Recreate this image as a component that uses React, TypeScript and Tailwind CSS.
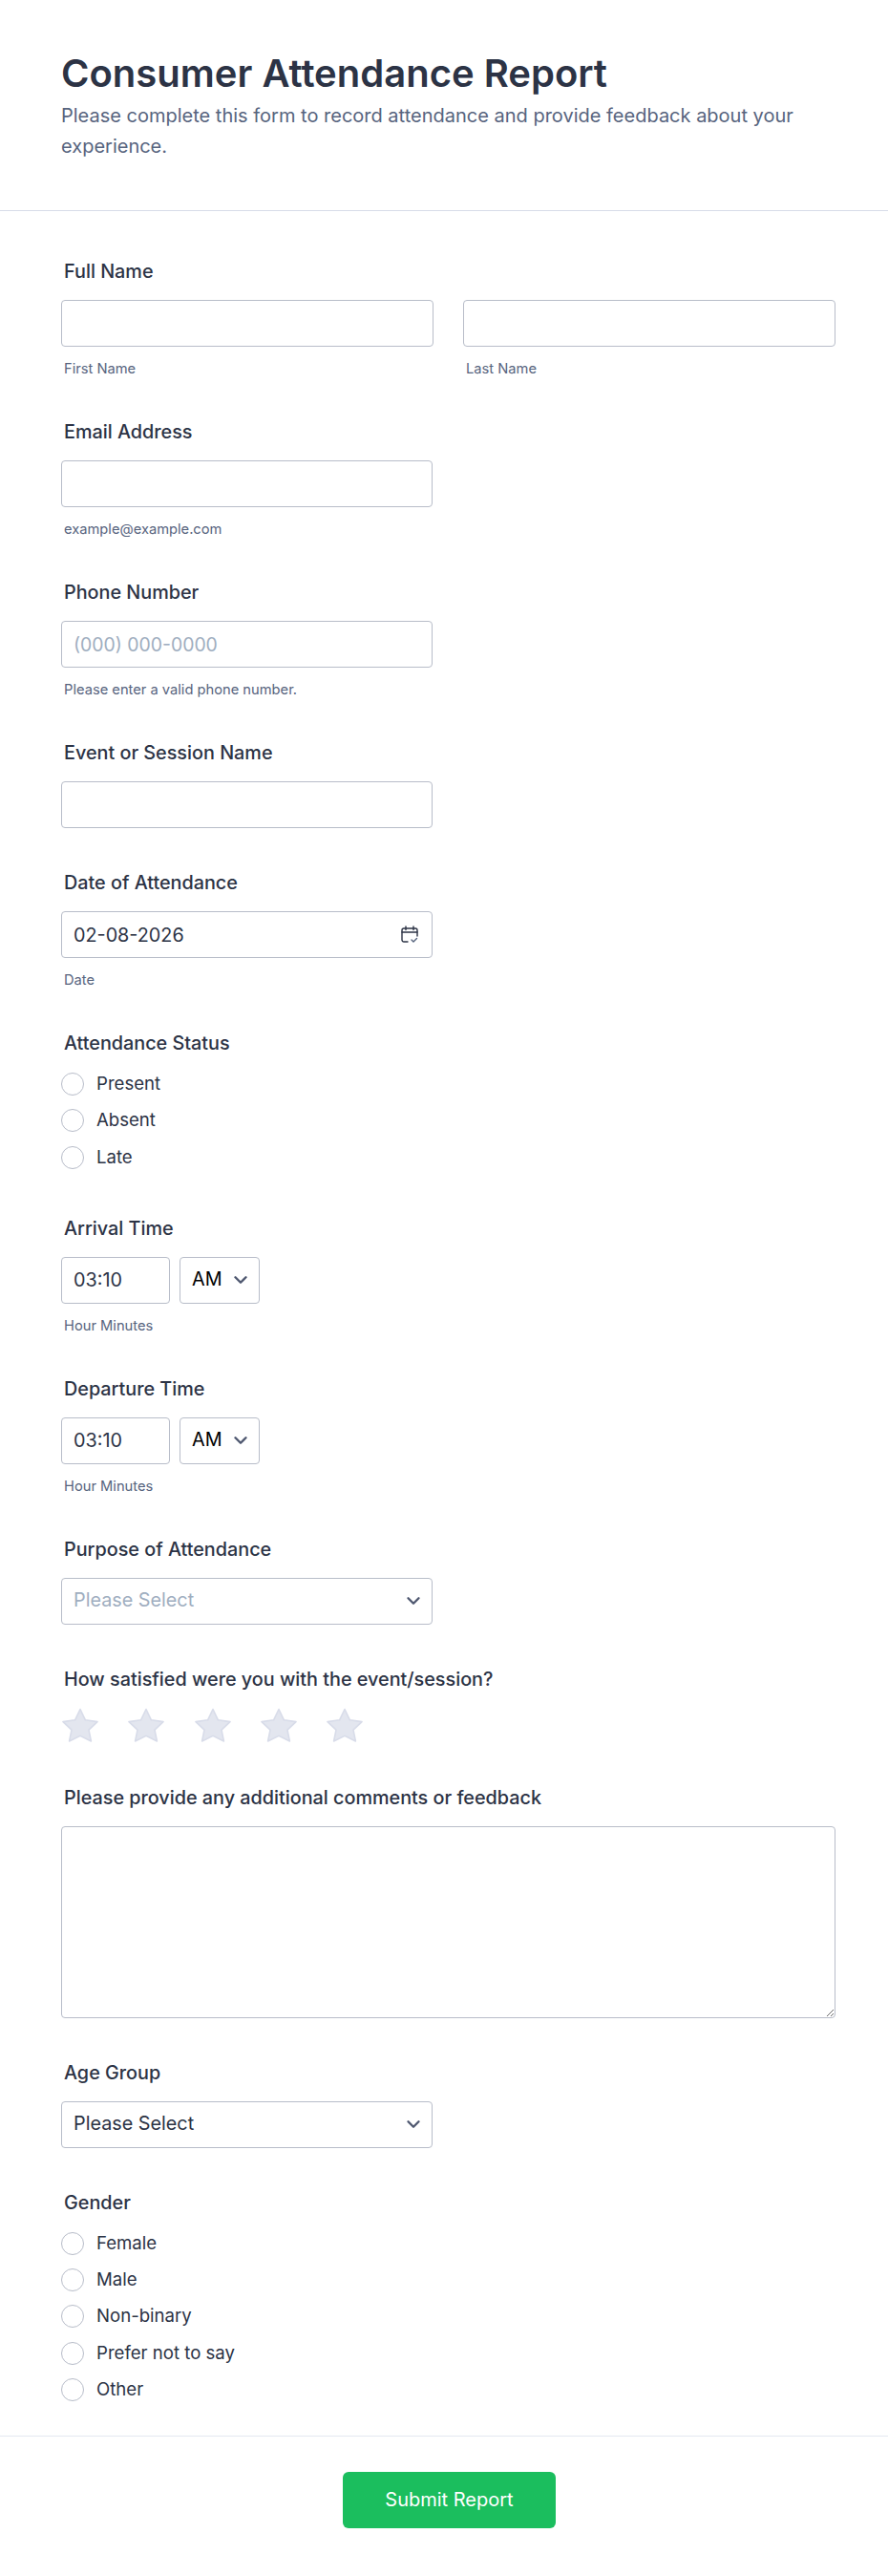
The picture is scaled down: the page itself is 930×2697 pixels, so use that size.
import { ChevronDown } from 'lucide-react'
import type { ReactNode } from 'react'

const inputCls =
  'h-[49px] rounded border border-[#b8bdc9] bg-white px-[12px] text-[19.8px] text-[#2c3345] outline-none placeholder:text-[19.4px] placeholder:text-[#a0aec0]'

const Label = ({ children }: { children: ReactNode }) => (
  <div className="mb-[18px] pl-[3px] text-[19.8px] leading-[24px] font-medium text-[#2c3345]">{children}</div>
)

const Sub = ({ children }: { children: ReactNode }) => (
  <div className="mt-[14px] pl-[3px] text-[14.7px] leading-[18px] text-[#57647e]">{children}</div>
)

const Radios = ({ options }: { options: string[] }) => (
  <div className="mt-[19px] flex flex-col gap-[14.33px]">
    {options.map((option) => (
      <label key={option} className="flex h-[24px] items-center gap-[13px] text-[18.6px] text-[#2c3345]">
        <span className="h-[24px] w-[24px] rounded-full border border-[#b8bdc9] bg-white" />
        {option}
      </label>
    ))}
  </div>
)

const TimeField = () => (
  <div>
    <div className="flex gap-[10px]">
      <input className={`${inputCls} w-[114px]`} defaultValue="03:10" />
      <div className="relative w-[84px]">
        <select className={`${inputCls} w-full appearance-none !text-black`} defaultValue="AM">
          <option>AM</option>
          <option>PM</option>
        </select>
        <ChevronDown className="pointer-events-none absolute top-[13px] right-[9px] h-[22px] w-[22px] text-[#4f5870]" strokeWidth={2.6} />
      </div>
    </div>
    <Sub>Hour Minutes</Sub>
  </div>
)

const SelectField = ({ placeholder }: { placeholder?: boolean }) => (
  <div className="relative w-[389px]">
    <select className={`${inputCls} w-full appearance-none ${placeholder ? '!text-[#a0aec0]' : ''}`}>
      <option>Please Select</option>
    </select>
    <ChevronDown className="pointer-events-none absolute top-[13px] right-[9px] h-[22px] w-[22px] text-[#4f5870]" strokeWidth={2.6} />
  </div>
)

const Star = () => (
  <svg width="40" height="36" viewBox="0 0 40 36" fill="#e3e6ef" stroke="#d8dce9" strokeWidth="1.6" strokeLinejoin="round">
    <path d="M20 1.5 25.4 12.8 38 14.6 29 23.2 31.4 35 20 29.4 8.6 35 11 23.2 2 14.6 14.6 12.8Z" />
  </svg>
)

export default function App() {
  return (
    <div className="min-h-[2697px] bg-white font-['Inter',sans-serif] text-[#2c3345]">
      <header className="border-b border-[#d8dce9] px-[64px] pt-[52px] pb-[51px]">
        <h1 className="text-[40px] leading-[50px] font-semibold text-[#2c3345]">Consumer Attendance Report</h1>
        <p className="mt-[3px] text-[20px] leading-[32px] text-[#57647e]">
          Please complete this form to record attendance and provide feedback about your experience.
        </p>
      </header>

      <form className="flex flex-col gap-[45px] pt-[51px] pr-[55px] pb-[36px] pl-[64px]">
        <div>
          <Label>Full Name</Label>
          <div className="flex gap-[31px]">
            <div className="w-[390px]">
              <input className={`${inputCls} w-full`} />
              <Sub>First Name</Sub>
            </div>
            <div className="w-[390px]">
              <input className={`${inputCls} w-full`} />
              <Sub>Last Name</Sub>
            </div>
          </div>
        </div>

        <div>
          <Label>Email Address</Label>
          <input className={`${inputCls} w-[389px]`} />
          <Sub>example@example.com</Sub>
        </div>

        <div>
          <Label>Phone Number</Label>
          <input className={`${inputCls} w-[389px]`} placeholder="(000) 000-0000" />
          <Sub>Please enter a valid phone number.</Sub>
        </div>

        <div>
          <Label>Event or Session Name</Label>
          <input className={`${inputCls} w-[389px]`} />
        </div>

        <div>
          <Label>Date of Attendance</Label>
          <div className="relative w-[389px]">
            <input className={`${inputCls} w-full`} defaultValue="02-08-2026" />
            <svg className="absolute top-[15px] right-[15px]" width="18" height="19" viewBox="0 0 18 19" fill="none" stroke="#2c3345" strokeWidth="1.4" strokeLinecap="round" strokeLinejoin="round">
              <path d="M7 17H3a2 2 0 0 1-2-2V5a2 2 0 0 1 2-2h12a2 2 0 0 1 2 2v6" />
              <path d="M1 7h16M5 1v3.5M13 1v3.5" />
              <path d="M11 15l2 2 3.5-3.5" stroke="#57647e" />
            </svg>
          </div>
          <Sub>Date</Sub>
        </div>

        <div className="pb-[5px]">
          <Label>Attendance Status</Label>
          <Radios options={['Present', 'Absent', 'Late']} />
        </div>

        <div>
          <Label>Arrival Time</Label>
          <TimeField />
        </div>

        <div>
          <Label>Departure Time</Label>
          <TimeField />
        </div>

        <div>
          <Label>Purpose of Attendance</Label>
          <SelectField placeholder />
        </div>

        <div>
          <Label>How satisfied were you with the event/session?</Label>
          <div className="flex h-[37px] gap-[29.3px]">
            <Star />
            <Star />
            <Star />
            <Star />
            <Star />
          </div>
        </div>

        <div>
          <Label>Please provide any additional comments or feedback</Label>
          <textarea className="block h-[201px] w-[811px] rounded border border-[#b8bdc9] bg-white outline-none" />
        </div>

        <div>
          <Label>Age Group</Label>
          <SelectField />
        </div>

        <div>
          <Label>Gender</Label>
          <Radios options={['Female', 'Male', 'Non-binary', 'Prefer not to say', 'Other']} />
        </div>
      </form>

      <footer className="flex justify-center border-t border-[#e3e8f0] pt-[37px] pl-[11px]">
        <button type="button" className="h-[59px] w-[223px] rounded-md bg-[#1bbe5e] text-[20px] text-white">
          Submit Report
        </button>
      </footer>
    </div>
  )
}
